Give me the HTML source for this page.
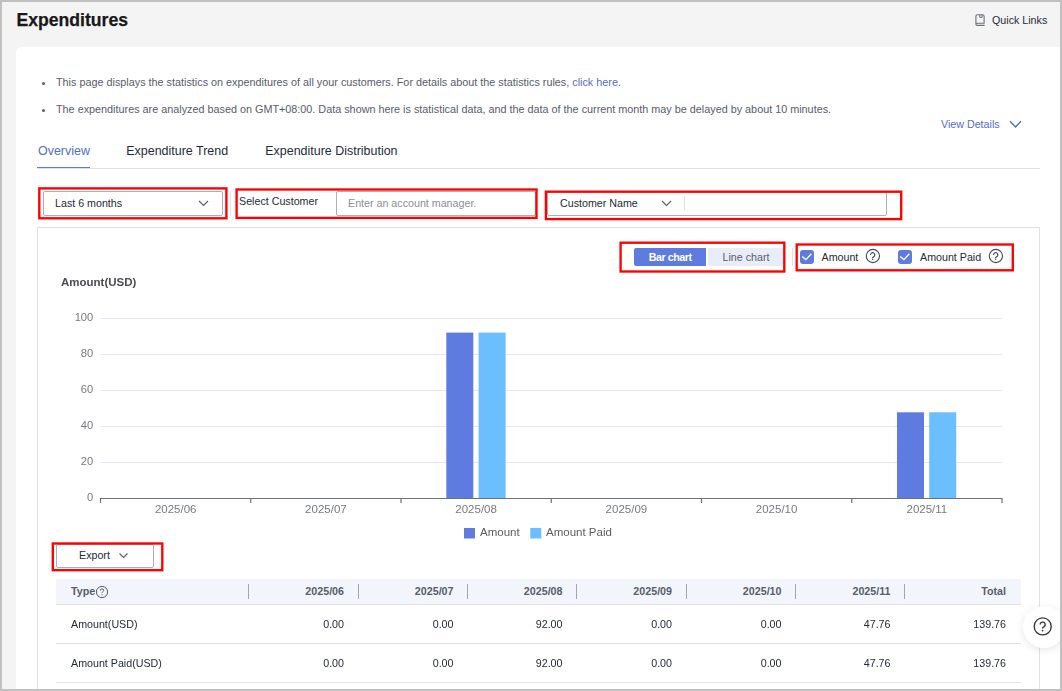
<!DOCTYPE html>
<html><head><meta charset="utf-8">
<style>
*{box-sizing:border-box;margin:0;padding:0}
html,body{width:1062px;height:691px;overflow:hidden;background:#f4f4f4;font-family:"Liberation Sans",sans-serif;position:relative}
.a{position:absolute}
.t{position:absolute;white-space:nowrap;line-height:1}
.sel{position:absolute;border:1px solid #adb0b8;border-radius:2px;background:#fff}
.vsep{position:absolute;width:1px;background:#dfe1e6}
.r{text-align:right}
.th{font-weight:bold;color:#575d6c;font-size:10.7px}
.td{color:#252b3a;font-size:10.7px}
</style></head><body>

<div class="t" style="left:16.5px;top:11.7px;font-size:17.6px;font-weight:bold;color:#191919;-webkit-text-stroke:0.25px #191919">Expenditures</div>

<svg class="a" style="left:974px;top:13px" width="12" height="14" viewBox="0 0 12 14"><path d="M1.9 11.2V3.2Q1.9 1.7 3.4 1.7H8.6Q10.1 1.7 10.1 3.2V10.3H3.4Q1.9 10.3 1.9 11.3Q1.9 12.4 3.4 12.4H10.6" fill="none" stroke="#6c7080" stroke-width="1.1"/><path d="M5.8 1.8V4.4H8.1V1.8" fill="none" stroke="#6c7080" stroke-width="1"/></svg>
<div class="t" style="left:992px;top:14.5px;font-size:10.7px;color:#252b3a">Quick Links</div>

<div class="a" style="left:16px;top:47px;width:1100px;height:700px;background:#fff;border-radius:6px"></div>

<div class="a" style="left:42px;top:82px;width:3px;height:3px;border-radius:50%;background:#575d6c"></div>
<div class="t" style="left:56px;top:77.2px;font-size:10.82px;color:#575d6c">This page displays the statistics on expenditures of all your customers. For details about the statistics rules, <span style="color:#526ecc">click here</span>.</div>
<div class="a" style="left:42px;top:109px;width:3px;height:3px;border-radius:50%;background:#575d6c"></div>
<div class="t" style="left:56px;top:103.8px;font-size:10.82px;color:#575d6c">The expenditures are analyzed based on GMT+08:00. Data shown here is statistical data, and the data of the current month may be delayed by about 10 minutes.</div>

<div class="t" style="left:941px;top:118.9px;font-size:10.7px;color:#526ecc">View Details</div>
<svg class="a" style="left:1009px;top:120px" width="14" height="9" viewBox="0 0 14 9"><path d="M1 1.2L6.5 7L12 1.2" fill="none" stroke="#526ecc" stroke-width="1.4"/></svg>

<!-- tabs -->
<div class="a" style="left:37px;top:167.5px;width:1003px;height:1px;background:#dfe1e6"></div>
<div class="t" style="left:38px;top:145.3px;font-size:12.46px;color:#526ecc">Overview</div>
<div class="a" style="left:37px;top:166.6px;width:53px;height:1.6px;background:#5e7ce0"></div>
<div class="t" style="left:126.3px;top:145.3px;font-size:12.46px;color:#252b3a">Expenditure Trend</div>
<div class="t" style="left:265.3px;top:145.3px;font-size:12.46px;color:#252b3a">Expenditure Distribution</div>

<!-- filters -->
<div class="sel" style="left:43px;top:191px;width:180px;height:25px"></div>
<div class="t" style="left:55px;top:198px;font-size:10.7px;color:#252b3a">Last 6 months</div>
<svg class="a" style="left:198px;top:199.6px" width="11" height="7" viewBox="0 0 11 7"><path d="M1 1L5.5 5.5L10 1" fill="none" stroke="#575d6c" stroke-width="1.1"/></svg>
<div class="vsep" style="left:230px;top:191px;height:25px"></div>

<div class="t" style="left:239px;top:196px;font-size:10.7px;color:#252b3a">Select Customer</div>
<div class="sel" style="left:336px;top:191px;width:200px;height:25px"></div>
<div class="t" style="left:348px;top:198px;font-size:10.7px;color:#8a8e99">Enter an account manager.</div>

<div class="sel" style="left:547px;top:191px;width:340px;height:25px"></div>
<div class="t" style="left:560px;top:198px;font-size:10.7px;color:#252b3a">Customer Name</div>
<svg class="a" style="left:660.5px;top:200px" width="11" height="7" viewBox="0 0 11 7"><path d="M1 1L5.5 5.5L10 1" fill="none" stroke="#575d6c" stroke-width="1.1"/></svg>
<div class="vsep" style="left:684px;top:196px;height:14px"></div>

<!-- chart container -->
<div class="a" style="left:37px;top:227px;width:1003px;height:500px;border:1px solid #dfe1e6;border-bottom:none"></div>

<!-- chart type buttons -->
<div class="a" style="left:634px;top:248px;width:72px;height:18px;background:#5e7ce0;border-radius:2px 0 0 2px"></div>
<div class="t" style="left:648.7px;top:251.6px;font-size:10.7px;font-weight:bold;color:#fff;letter-spacing:-0.45px">Bar chart</div>
<div class="a" style="left:708px;top:248px;width:75px;height:18px;background:#e9edfa;border-radius:0 2px 2px 0"></div>
<div class="t" style="left:722.5px;top:251.6px;font-size:10.7px;color:#575d6c">Line chart</div>
<div class="vsep" style="left:792px;top:248px;height:18px"></div>

<!-- checkboxes -->
<div class="a" style="left:800px;top:250px;width:14px;height:14px;background:#5e7ce0;border-radius:3px"></div>
<svg class="a" style="left:800px;top:250px" width="14" height="14" viewBox="0 0 14 14"><path d="M2.2 6.4L5.9 9.6L11.4 3.7" fill="none" stroke="#fff" stroke-width="1.3"/></svg>
<div class="t" style="left:821.5px;top:251.6px;font-size:10.7px;color:#252b3a">Amount</div>
<svg class="a" style="left:865px;top:248px" width="16" height="16" viewBox="0 0 16 16"><circle cx="7.9" cy="8" r="6.6" fill="none" stroke="#464b59" stroke-width="1.1"/><path d="M5.5 6.9A2.15 2.15 0 1 1 9.3 8.2Q8.3 8.9 7.6 9.6V10" fill="none" stroke="#464b59" stroke-width="1.15"/><circle cx="7.6" cy="11.3" r="0.8" fill="#464b59"/></svg>

<div class="a" style="left:898px;top:250px;width:14px;height:14px;background:#5e7ce0;border-radius:3px"></div>
<svg class="a" style="left:898px;top:250px" width="14" height="14" viewBox="0 0 14 14"><path d="M2.2 6.4L5.9 9.6L11.4 3.7" fill="none" stroke="#fff" stroke-width="1.3"/></svg>
<div class="t" style="left:920px;top:251.6px;font-size:10.7px;color:#252b3a">Amount Paid</div>
<svg class="a" style="left:988px;top:248px" width="16" height="16" viewBox="0 0 16 16"><circle cx="7.9" cy="8" r="6.6" fill="none" stroke="#464b59" stroke-width="1.1"/><path d="M5.5 6.9A2.15 2.15 0 1 1 9.3 8.2Q8.3 8.9 7.6 9.6V10" fill="none" stroke="#464b59" stroke-width="1.15"/><circle cx="7.6" cy="11.3" r="0.8" fill="#464b59"/></svg>

<!-- chart -->
<svg class="a" style="left:0;top:0;will-change:transform" width="1062" height="691" viewBox="0 0 1062 691" font-family="Liberation Sans, sans-serif">
<text x="61" y="285.8" font-size="11.5" font-weight="bold" fill="#4b4d53">Amount(USD)</text>
<g fill="#777a82" font-size="11.2" text-anchor="end">
<text x="93.3" y="321">100</text><text x="93.3" y="357">80</text><text x="93.3" y="393">60</text><text x="93.3" y="429">40</text><text x="93.3" y="465">20</text><text x="93.3" y="501">0</text>
</g>
<g stroke="#e3e7f2" stroke-width="1">
<line x1="100.5" y1="318.5" x2="1002" y2="318.5"/>
<line x1="100.5" y1="354.5" x2="1002" y2="354.5"/>
<line x1="100.5" y1="390.5" x2="1002" y2="390.5"/>
<line x1="100.5" y1="426.5" x2="1002" y2="426.5"/>
<line x1="100.5" y1="462.5" x2="1002" y2="462.5"/>
</g>
<rect x="446.3" y="332.6" width="27" height="165.9" fill="#5e7ce0"/>
<rect x="478.6" y="332.6" width="27" height="165.9" fill="#6cbfff"/>
<rect x="897" y="412.3" width="27" height="86.2" fill="#5e7ce0"/>
<rect x="929.2" y="412.3" width="27" height="86.2" fill="#6cbfff"/>
<g stroke="#6e717c" stroke-width="1.2" fill="none">
<line x1="100" y1="498.5" x2="1002.5" y2="498.5"/>
<path d="M100.5 498.5V503M250.75 498.5V503M401 498.5V503M551.25 498.5V503M701.5 498.5V503M851.75 498.5V503M1002 498.5V503"/>
</g>
<g fill="#777a82" font-size="11.5" text-anchor="middle">
<text x="175.7" y="513">2025/06</text><text x="325.9" y="513">2025/07</text><text x="476.1" y="513">2025/08</text><text x="626.4" y="513">2025/09</text><text x="776.6" y="513">2025/10</text><text x="926.9" y="513">2025/11</text>
</g>
<rect x="464" y="528" width="11" height="10.5" fill="#5e7ce0"/>
<text x="480" y="536.3" font-size="11.5" fill="#5a5d66">Amount</text>
<rect x="530.3" y="528" width="11" height="10.5" fill="#6cbfff"/>
<text x="546" y="536.3" font-size="11.5" fill="#5a5d66">Amount Paid</text>
</svg>

<!-- export -->
<div class="sel" style="left:56px;top:544px;width:98px;height:24px"></div>
<div class="t" style="left:79px;top:550.2px;font-size:10.7px;color:#252b3a">Export</div>
<svg class="a" style="left:118px;top:552px" width="11" height="7" viewBox="0 0 11 7"><path d="M1.5 1.5L5.5 5.5L9.5 1.5" fill="none" stroke="#575d6c" stroke-width="1.1"/></svg>

<!-- table -->
<div class="a" style="left:56px;top:579px;width:965px;height:25.5px;background:#f2f5fc;border-bottom:1px solid #dfe1e6"></div>
<div class="a" style="left:56px;top:643px;width:965px;height:1px;background:#dfe1e6"></div>
<div class="a" style="left:56px;top:682px;width:965px;height:1px;background:#dfe1e6"></div>
<div class="vsep" style="left:248px;top:584px;height:14.5px;background:#a3a6ae"></div>
<div class="vsep" style="left:358px;top:584px;height:14.5px;background:#a3a6ae"></div>
<div class="vsep" style="left:467px;top:584px;height:14.5px;background:#a3a6ae"></div>
<div class="vsep" style="left:576px;top:584px;height:14.5px;background:#a3a6ae"></div>
<div class="vsep" style="left:686px;top:584px;height:14.5px;background:#a3a6ae"></div>
<div class="vsep" style="left:795px;top:584px;height:14.5px;background:#a3a6ae"></div>
<div class="vsep" style="left:904px;top:584px;height:14.5px;background:#a3a6ae"></div>

<div class="t th" style="left:71px;top:585.5px">Type</div>
<svg class="a" style="left:95px;top:585px" width="14" height="14" viewBox="0 0 14 14"><circle cx="7" cy="7" r="5.6" fill="none" stroke="#575d6c" stroke-width="1"/><path d="M5.3 5.6Q5.3 3.9 7 3.9Q8.7 3.9 8.7 5.4Q8.7 6.3 7.7 6.8Q7 7.2 7 8" fill="none" stroke="#575d6c" stroke-width="1"/><circle cx="7" cy="9.8" r="0.6" fill="#575d6c"/></svg>

<div class="t th r" style="left:244px;width:100px;top:585.5px">2025/06</div>
<div class="t th r" style="left:353.5px;width:100px;top:585.5px">2025/07</div>
<div class="t th r" style="left:462.5px;width:100px;top:585.5px">2025/08</div>
<div class="t th r" style="left:572px;width:100px;top:585.5px">2025/09</div>
<div class="t th r" style="left:681.5px;width:100px;top:585.5px">2025/10</div>
<div class="t th r" style="left:790.5px;width:100px;top:585.5px">2025/11</div>
<div class="t th r" style="left:906px;width:100px;top:585.5px">Total</div>

<div class="t td" style="left:71px;top:619px">Amount(USD)</div>
<div class="t td r" style="left:244px;width:100px;top:619px">0.00</div>
<div class="t td r" style="left:353.5px;width:100px;top:619px">0.00</div>
<div class="t td r" style="left:462.5px;width:100px;top:619px">92.00</div>
<div class="t td r" style="left:572px;width:100px;top:619px">0.00</div>
<div class="t td r" style="left:681.5px;width:100px;top:619px">0.00</div>
<div class="t td r" style="left:790.5px;width:100px;top:619px">47.76</div>
<div class="t td r" style="left:906px;width:100px;top:619px">139.76</div>

<div class="t td" style="left:71px;top:658px">Amount Paid(USD)</div>
<div class="t td r" style="left:244px;width:100px;top:658px">0.00</div>
<div class="t td r" style="left:353.5px;width:100px;top:658px">0.00</div>
<div class="t td r" style="left:462.5px;width:100px;top:658px">92.00</div>
<div class="t td r" style="left:572px;width:100px;top:658px">0.00</div>
<div class="t td r" style="left:681.5px;width:100px;top:658px">0.00</div>
<div class="t td r" style="left:790.5px;width:100px;top:658px">47.76</div>
<div class="t td r" style="left:906px;width:100px;top:658px">139.76</div>

<!-- floating help -->
<div class="a" style="left:1023px;top:605.5px;width:42px;height:42px;border-radius:50%;background:#fff;box-shadow:0 2px 8px rgba(0,0,0,0.10)"></div>
<svg class="a" style="left:1032px;top:616px" width="22" height="22" viewBox="0 0 22 22"><circle cx="10.7" cy="10.4" r="8.5" fill="none" stroke="#333" stroke-width="1.35"/><path d="M8.2 8.6A2.5 2.5 0 1 1 12.7 10.1Q11.6 11.1 10.6 12V12.6" fill="none" stroke="#333" stroke-width="1.35"/><circle cx="10.6" cy="14.6" r="0.85" fill="#333"/></svg>

<!-- red annotation boxes -->
<svg class="a" style="left:0;top:0" width="1062" height="691" viewBox="0 0 1062 691">
<g fill="none" stroke="#ff0000" stroke-width="2.35">
<rect x="39.3" y="188.4" width="187.1" height="29.9"/>
<rect x="236.6" y="189.5" width="299.9" height="28.4"/>
<rect x="545.9" y="191.7" width="355.3" height="27.4"/>
<rect x="620.6" y="242.7" width="163.7" height="28.8"/>
<rect x="796.7" y="244.5" width="216.1" height="25.8"/>
<rect x="52.8" y="543.5" width="109.5" height="26.7"/>
</g>
</svg>

<!-- screenshot frame -->
<div class="a" style="left:0;top:0;width:1062px;height:2px;background:#c0c0c0"></div>
<div class="a" style="left:0;top:689px;width:1062px;height:2px;background:#c0c0c0"></div>
<div class="a" style="left:0;top:0;width:2px;height:691px;background:#c0c0c0"></div>
<div class="a" style="left:1060px;top:0;width:2px;height:691px;background:#c0c0c0"></div>
</body></html>
